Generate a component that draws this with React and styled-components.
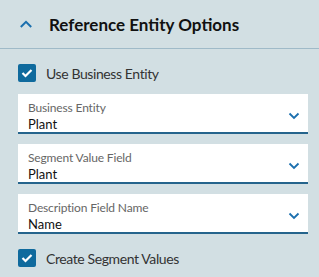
import React from 'react';
import styled, { createGlobalStyle } from 'styled-components';

const GlobalStyle = createGlobalStyle`
    html, body {
        margin: 0;
        padding: 0;
        background: #d2dfe3;
        font-family: Lato, "Open Sans", sans-serif;
    }
`;

const Panel = styled.div`
    width: 319px;
    height: 277px;
    background: #d2dfe3;
    overflow: hidden;
`;

const Header = styled.div`
    display: flex;
    align-items: center;
    gap: 17px;
    height: 49px;
    padding-left: 20px;
    box-sizing: border-box;
    border-bottom: 1px solid #9fbac8;
`;

const HeaderTitle = styled.h2`
    margin: 0;
    font-size: 17px;
    font-weight: 700;
    color: #111;
`;

const Body = styled.div`
    display: flex;
    flex-direction: column;
    padding: 15px 11px 0 18px;
`;

const CheckRow = styled.label`
    display: flex;
    align-items: center;
    gap: 10px;
    height: 18px;
    font-size: 14px;
    letter-spacing: -0.4px;
    color: #333;
    margin-top: ${(props) => props.top || 0}px;
`;

const Box = styled.span`
    display: flex;
    align-items: center;
    justify-content: center;
    width: 18px;
    height: 18px;
    border-radius: 2px;
    background: #0f6a9d;
`;

const Fields = styled.div`
    display: flex;
    flex-direction: column;
    gap: 10px;
    margin-top: 12px;
`;

const Field = styled.div`
    display: flex;
    align-items: flex-start;
    justify-content: space-between;
    height: 40px;
    box-sizing: border-box;
    background: #fff;
    border-bottom: 2px solid #25648c;
    padding: 0 8px 0 10px;
`;

const FieldText = styled.div`
    display: flex;
    flex-direction: column;
    padding-top: 5px;
`;

const FieldLabel = styled.span`
    font-size: 12px;
    line-height: 17px;
    letter-spacing: -0.15px;
    color: #666;
`;

const FieldValue = styled.span`
    font-size: 13px;
    line-height: 16px;
    color: #111;
`;

const ChevronSlot = styled.span`
    display: flex;
    margin-top: 18px;
`;

const Chevron = ({ up }) => (
    <svg width="12" height="8" viewBox="0 0 12 8">
        <path
            d={up ? 'M0.8 7 L6 1.8 L11.2 7' : 'M1.5 1.5 L6 6 L10.5 1.5'}
            fill="none"
            stroke="#1b6fae"
            strokeWidth={up ? 2 : 1.8}
        />
    </svg>
);

const Check = () => (
    <svg width="12" height="10" viewBox="0 0 12 10">
        <path d="M1.5 5 L4.5 8 L10.5 2" fill="none" stroke="#fff" strokeWidth="2.2" />
    </svg>
);

const fields = [
    ['Business Entity', 'Plant'],
    ['Segment Value Field', 'Plant'],
    ['Description Field Name', 'Name'],
];

export default function App() {
    return (
        <Panel>
            <GlobalStyle />
            <Header>
                <Chevron up />
                <HeaderTitle>Reference Entity Options</HeaderTitle>
            </Header>
            <Body>
                <CheckRow>
                    <Box><Check /></Box>
                    Use Business Entity
                </CheckRow>
                <Fields>
                    {fields.map(([label, value]) => (
                        <Field key={label}>
                            <FieldText>
                                <FieldLabel>{label}</FieldLabel>
                                <FieldValue>{value}</FieldValue>
                            </FieldText>
                            <ChevronSlot><Chevron /></ChevronSlot>
                        </Field>
                    ))}
                </Fields>
                <CheckRow top={15}>
                    <Box><Check /></Box>
                    Create Segment Values
                </CheckRow>
            </Body>
        </Panel>
    );
}
